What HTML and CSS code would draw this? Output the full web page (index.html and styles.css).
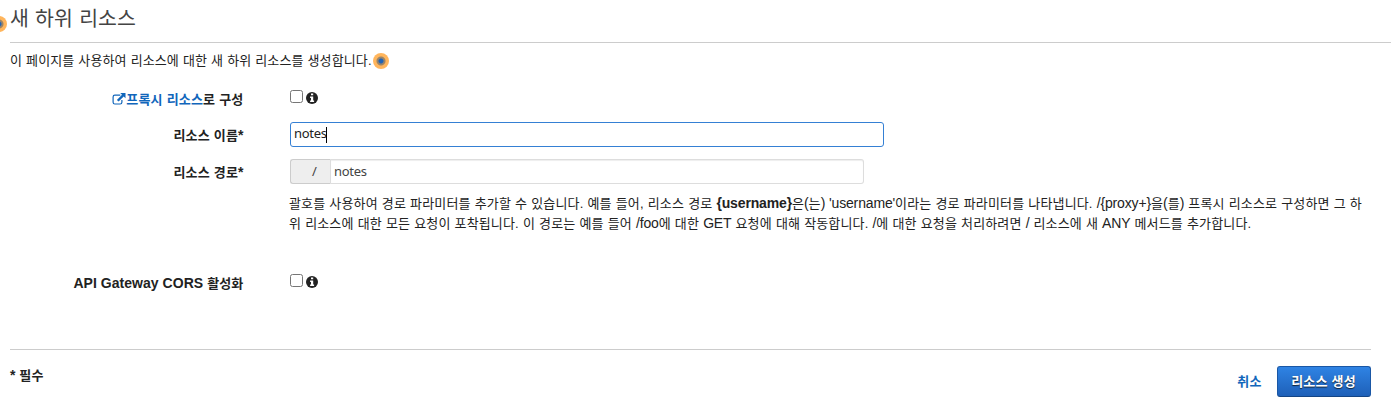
FILE: index.html
```html
<!DOCTYPE html>
<html lang="ko">
<head>
<meta charset="utf-8">
<title>새 하위 리소스</title>
<link rel="stylesheet" href="styles.css">
</head>
<body>
<svg width="0" height="0" class="defs">
  <symbol id="info" viewBox="0 0 12 12"><circle cx="6" cy="6" r="6" fill="#222"/><path d="M5 1.600h2.200v1.700H5zM4.100 4.500h3.100v4h.9V10H4.100V8.500H5V6h-.9z" fill="#fff"/></symbol>
</svg>
<header class="head">
  <span class="beacon beacon-edge"></span>
  <h1>새 하위 리소스</h1>
</header>
<p class="intro">이 페이지를 사용하여 리소스에 대한 새 하위 리소스를 생성합니다.<span class="beacon"></span></p>
<form class="form">
  <div class="row proxy">
    <div class="label"><a class="link"><svg class="ext" viewBox="0 0 14 14"><path d="M8.300 3.200H2.900Q1.100 3.200 1.100 5v5.200Q1.100 12 2.900 12h5.200q1.800 0 1.800-1.800V8" fill="none" stroke="#1166bb" stroke-width="1.200"/><path d="M8.200 1H13.500v5.300L11.700 4.500 6.600 9.600 4.900 7.900 10 2.800z" fill="#1166bb"/></svg>프록시 리소스</a>로 구성</div>
    <div class="check"><input type="checkbox"><svg class="info"><use href="#info"/></svg></div>
  </div>
  <div class="row name">
    <div class="label">리소스 이름<b class="en">*</b></div>
    <div class="input focus">notes<i class="caret"></i></div>
  </div>
  <div class="row path">
    <div class="label">리소스 경로<b class="en">*</b></div>
    <div class="group"><div class="addon">/</div><div class="input muted">notes</div></div>
  </div>
  <div class="help">
    <div class="line l1">괄호를 사용하여 경로 파라미터를 추가할 수 있습니다. 예를 들어, 리소스 경로 <b class="en">{username}</b>은<span class="en">(</span>는<span class="en">) 'username'</span>이라는 경로 파라미터를 나타냅니다. <span class="en">/{proxy+}</span>을<span class="en">(</span>를<span class="en">)</span> 프록시 리소스로 구성하면 그 하</div>
    <div class="line l2">위 리소스에 대한 모든 요청이 포착됩니다. 이 경로는 예를 들어 <span class="en">/foo</span>에 대한 <span class="en">GET</span> 요청에 대해 작동합니다. <span class="en">/</span>에 대한 요청을 처리하려면 <span class="en">/</span> 리소스에 새 <span class="en">ANY</span> 메서드를 추가합니다.</div>
  </div>
  <div class="row cors">
    <div class="label"><span class="en">API Gateway CORS </span>활성화</div>
    <div class="check"><input type="checkbox"><svg class="info"><use href="#info"/></svg></div>
  </div>
</form>
<footer class="foot">
  <div class="required"><span class="en">* </span>필수</div>
  <div class="actions"><a class="link cancel">취소</a><button class="primary">리소스 생성</button></div>
</footer>
</body>
</html>
```
FILE: styles.css
```css
* { box-sizing: border-box; }
body {
  margin: 0;
  width: 1396px;
  height: 409px;
  overflow: hidden;
  background: #fff;
  color: #222;
  font: 13px/20px "Liberation Sans", "Noto Sans CJK KR", sans-serif;
  letter-spacing: 0.12px;
  word-spacing: 0.28px;
}
.defs { position: absolute; }
.en { font-size: 14px; letter-spacing: 0; word-spacing: 0; line-height: 1; }
.line .en { letter-spacing: -0.15px; }
.head {
  position: relative;
  height: 43px;
  margin: 0 5px 0 10px;
  border-bottom: 1px solid #ccc;
}
h1 {
  margin: 0;
  padding-top: 4px;
  font-size: 20.500px;
  font-weight: 400;
  line-height: 30px;
  color: #444;
}
.beacon {
  display: inline-block;
  width: 16px;
  height: 16px;
  margin-left: 1px;
  vertical-align: -4px;
  border-radius: 50%;
  background: radial-gradient(circle, #1f63b8 0 2px, #9a8468 3px 4px, #ffb55c 5px);
}
.beacon-edge { position: absolute; left: -19px; top: 16px; margin: 0; }
.intro { margin: 0 0 0 10px; padding-top: 8px; height: 44px; letter-spacing: 0.11px; }
.row { display: flex; }
.label { width: 243.500px; margin-right: 46.500px; text-align: right; font-weight: 700; white-space: nowrap; letter-spacing: 0.16px; }
.link { color: #1166bb; }
.ext { width: 14px; height: 14px; vertical-align: -2px; }
.proxy { height: 35px; }
.proxy .label { padding-top: 3px; }
.check { display: flex; align-items: flex-start; padding-top: 3px; }
.check input { margin: 0; width: 13px; height: 13px; }
.info { width: 12px; height: 12px; margin: 2px 0 0 3px; }
.name { height: 37px; }
.name .label, .path .label { padding-top: 4px; }
.input {
  display: flex;
  height: 25px;
  padding: 0 3px;
  border: 1px solid #ddd;
  border-radius: 3px;
  font: 13px/22px "Noto Sans", sans-serif;
  letter-spacing: -0.300px;
}
.focus { width: 594px; border-color: #3580d4; color: #222; line-height: 21px; }
.caret { width: 1px; height: 16px; margin: 4px 0 0 -0.8px; background: #000; }
.path { height: 35px; }
.group { display: flex; width: 574px; }
.addon {
  width: 41px;
  height: 25px;
  padding-left: 21px;
  border: 1px solid #ccc;
  border-right-color: #ddd;
  border-radius: 3px 0 0 3px;
  background: #eee;
  color: #444;
  font: 13px/22px "Noto Sans", sans-serif;
}
.muted {
  flex: 1;
  border-left: 0;
  border-radius: 0 3px 3px 0;
  color: #444;
  box-shadow: inset 0 1px 1px #eee;
}
.help { height: 77px; margin-left: 289px; white-space: nowrap; }
.line { height: 20px; }
.l1 { letter-spacing: 0.15px; }
.l2 { letter-spacing: 0.15px; }
.cors { height: 78px; }
.cors .label { padding-top: 3px; }
.cors .en { letter-spacing: 0.04px; }
.foot {
  display: flex;
  justify-content: space-between;
  margin: 0 25px 0 10px;
  border-top: 1px solid #ccc;
  font-weight: 700;
}
.required { padding-top: 16px; }
.actions { display: flex; align-items: center; padding-top: 16px; }
.cancel { margin-right: 15.500px; }
.primary {
  width: 94px;
  height: 31px;
  padding: 0 1px 0 0;
  border: 1px solid #1a57a5;
  border-bottom-color: #144585;
  border-radius: 3px;
  background: linear-gradient(#2f83e4, #1e60b8);
  color: #fff;
  font: inherit;
  letter-spacing: 0.2px;
  text-shadow: 0 1px 1px #123;
}
```
